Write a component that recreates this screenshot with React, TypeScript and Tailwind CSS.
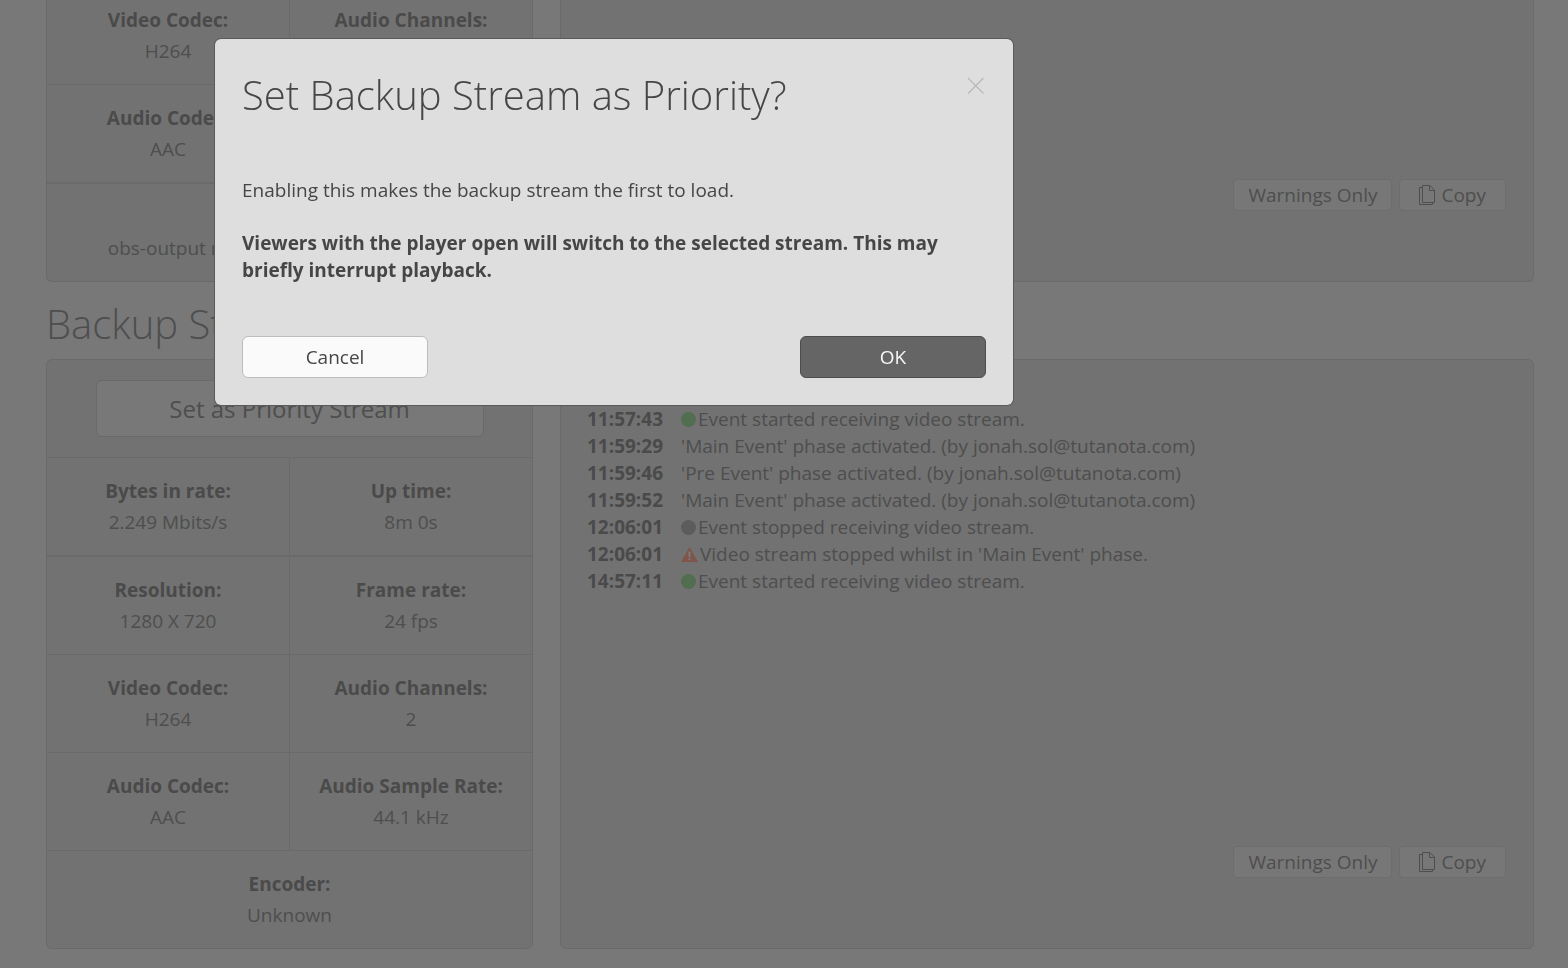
import clsx from "clsx";

type Stat = { label: string; value: string };
type LogEntry = { time: string; icon?: "started" | "stopped" | "warning"; text: string };

const mainStats: Stat[][] = [
  [
    { label: "Audio Codec:", value: "AAC" },
    { label: "Audio Sample Rate:", value: "44.1 kHz" },
  ],
  [{ label: "Encoder:", value: "obs-output module (libobs version 25.01)" }],
];

const codecStats: Stat[] = [
  { label: "Video Codec:", value: "H264" },
  { label: "Audio Channels:", value: "2" },
];

const backupStats: Stat[][] = [
  [
    { label: "Bytes in rate:", value: "2.249 Mbits/s" },
    { label: "Up time:", value: "8m 0s" },
  ],
  [
    { label: "Resolution:", value: "1280 X 720" },
    { label: "Frame rate:", value: "24 fps" },
  ],
  codecStats,
  [
    { label: "Audio Codec:", value: "AAC" },
    { label: "Audio Sample Rate:", value: "44.1 kHz" },
  ],
  [{ label: "Encoder:", value: "Unknown" }],
];

const log: LogEntry[] = [
  { time: "11:57:43", icon: "started", text: "Event started receiving video stream." },
  { time: "11:59:29", text: "'Main Event' phase activated. (by jonah.sol@tutanota.com)" },
  { time: "11:59:46", text: "'Pre Event' phase activated. (by jonah.sol@tutanota.com)" },
  { time: "11:59:52", text: "'Main Event' phase activated. (by jonah.sol@tutanota.com)" },
  { time: "12:06:01", icon: "stopped", text: "Event stopped receiving video stream." },
  { time: "12:06:01", icon: "warning", text: "Video stream stopped whilst in 'Main Event' phase." },
  { time: "14:57:11", icon: "started", text: "Event started receiving video stream." },
];

function StatRow({ stats, className }: { stats: Stat[]; className?: string }) {
  return (
    <dl className={clsx("flex border-[#6a6a6a] text-center leading-[31px]", className)}>
      {stats.map((stat, i) => (
        <div
          key={stat.label}
          className={clsx("min-w-0 flex-1 pt-[18px] pb-[17px]", i > 0 && "border-l border-[#6a6a6a]")}
        >
          <dt className="font-bold text-[#4a4a4a]">{stat.label}</dt>
          <dd>{stat.value}</dd>
        </div>
      ))}
    </dl>
  );
}

function StatusIcon({ icon }: { icon: LogEntry["icon"] }) {
  if (icon === "warning") {
    return (
      <svg width="17" height="15" viewBox="0 0 17 15" className="mr-0.5 shrink-0">
        <path d="M8.5 0L17 15H0Z" fill="#7f5449" />
        <path d="M7.4 4.5H9.6L9.3 10.2H7.7ZM7.5 11.2H9.5V13.2H7.5Z" fill="#7c7c7c" />
      </svg>
    );
  }
  return (
    <span
      className={clsx(
        "mr-0.5 size-[15px] shrink-0 rounded-full",
        icon === "started" ? "bg-[#526e50]" : "bg-[#5c5c5c]"
      )}
    />
  );
}

function CopyIcon() {
  return (
    <svg width="16" height="20" viewBox="0 0 16 20" fill="none" stroke="currentColor">
      <path d="M3.5 .5H11L15.5 5V17.5H3.5Z" />
      <path d="M10.5 .5V5.5H15.5" />
      <path d="M3.5 2.5H.5V19.5H13.5V17.5" />
    </svg>
  );
}

function LogActions() {
  return (
    <div className="mt-auto flex justify-end gap-[7px]">
      <button className="h-8 rounded border border-[#6d6d6d] bg-[#777777] px-3.5">Warnings Only</button>
      <button className="flex h-8 items-center gap-1.5 rounded border border-[#6d6d6d] bg-[#777777] px-[19px]">
        <CopyIcon />
        Copy
      </button>
    </div>
  );
}

function PriorityDialog() {
  return (
    <div className="fixed inset-0 z-10 pt-[39px] pl-[215px]">
      <div
        role="dialog"
        aria-modal="true"
        aria-labelledby="dialog-title"
        className="w-[798px] max-w-full rounded-md bg-[#dedede] p-[27px] text-[#464646] shadow-[0_0_0_1px_#5a5a5a]"
      >
        <div className="flex items-start justify-between">
          <h1 id="dialog-title" className="text-[40px] leading-[58px] font-light">
            Set Backup Stream as Priority?
          </h1>
          <button aria-label="Close" className="mt-2 text-[#b8b8b8]">
            <svg width="22" height="24" viewBox="0 0 22 24" fill="none" stroke="currentColor" strokeWidth="1.2">
              <path d="M4 4L19.5 19.5M19.5 4L4 19.5" />
            </svg>
          </button>
        </div>
        <p className="mt-[53px] leading-[27px]">Enabling this makes the backup stream the first to load.</p>
        <p className="mt-[26px] leading-[27px] font-bold">
          Viewers with the player open will switch to the selected stream. This may briefly interrupt playback.
        </p>
        <div className="mt-[52px] flex justify-between">
          <button className="h-[42px] w-[186px] rounded-md border border-[#bdbdbd] bg-[#fafafa]">Cancel</button>
          <button className="h-[42px] w-[186px] rounded-md border border-[#4d4d4d] bg-[#656565] text-[#f7f7f7]">
            OK
          </button>
        </div>
      </div>
    </div>
  );
}

export default function App() {
  return (
    <div className="min-h-screen bg-[#787878] pr-[34px] pb-[19px] pl-[46px] font-['Open_Sans',sans-serif] text-[19px] text-[#4e4e4e]">
      <section className="grid grid-cols-[1fr_2fr] gap-[27px]">
        <div className="overflow-hidden rounded-b-md border border-t-0 border-[#6a6a6a] bg-[#727272]">
          <dl className="flex text-center leading-[31px]">
            {codecStats.map((stat, i) => (
              <div
                key={stat.label}
                className={clsx("flex-1 pt-[5px] pb-[17px]", i > 0 && "border-l border-[#6a6a6a]")}
              >
                <dt className="font-bold text-[#4a4a4a]">{stat.label}</dt>
                <dd>{stat.value}</dd>
              </div>
            ))}
          </dl>
          <StatRow stats={mainStats[0]} className="border-t" />
          <StatRow stats={mainStats[1]} className="border-t-2" />
        </div>
        <div className="flex flex-col rounded-b-md border border-t-0 border-[#6a6a6a] bg-[#727272] pr-[27px] pb-[70px] pl-[26px]">
          <LogActions />
        </div>
      </section>

      <h2 className="pt-[13px] pb-1.5 text-[40px] leading-[58px] font-light">Backup Stream</h2>

      <section className="grid grid-cols-[1fr_2fr] gap-[27px]">
        <div className="rounded-md border border-[#6a6a6a] bg-[#727272]">
          <div className="flex justify-center py-5">
            <button className="h-[57px] w-4/5 rounded-md border border-[#6a6a6a] bg-[#787878] text-2xl">
              Set as Priority Stream
            </button>
          </div>
          {backupStats.map((stats, i) => (
            <StatRow key={i} stats={stats} className={i === 1 ? "border-t-2" : "border-t"} />
          ))}
        </div>
        <div className="flex flex-col rounded-md border border-[#6a6a6a] bg-[#727272] pt-[46px] pr-[27px] pb-[70px] pl-[26px]">
          <table className="w-full text-left leading-[27px]">
            <tbody>
              {log.map((entry, i) => (
                <tr key={i}>
                  <th className="w-[94px] p-0 font-bold text-[#4a4a4a]">{entry.time}</th>
                  <td className="p-0">
                    <div className="flex items-center">
                      {entry.icon && <StatusIcon icon={entry.icon} />}
                      {entry.text}
                    </div>
                  </td>
                </tr>
              ))}
            </tbody>
          </table>
          <LogActions />
        </div>
      </section>

      <PriorityDialog />
    </div>
  );
}
